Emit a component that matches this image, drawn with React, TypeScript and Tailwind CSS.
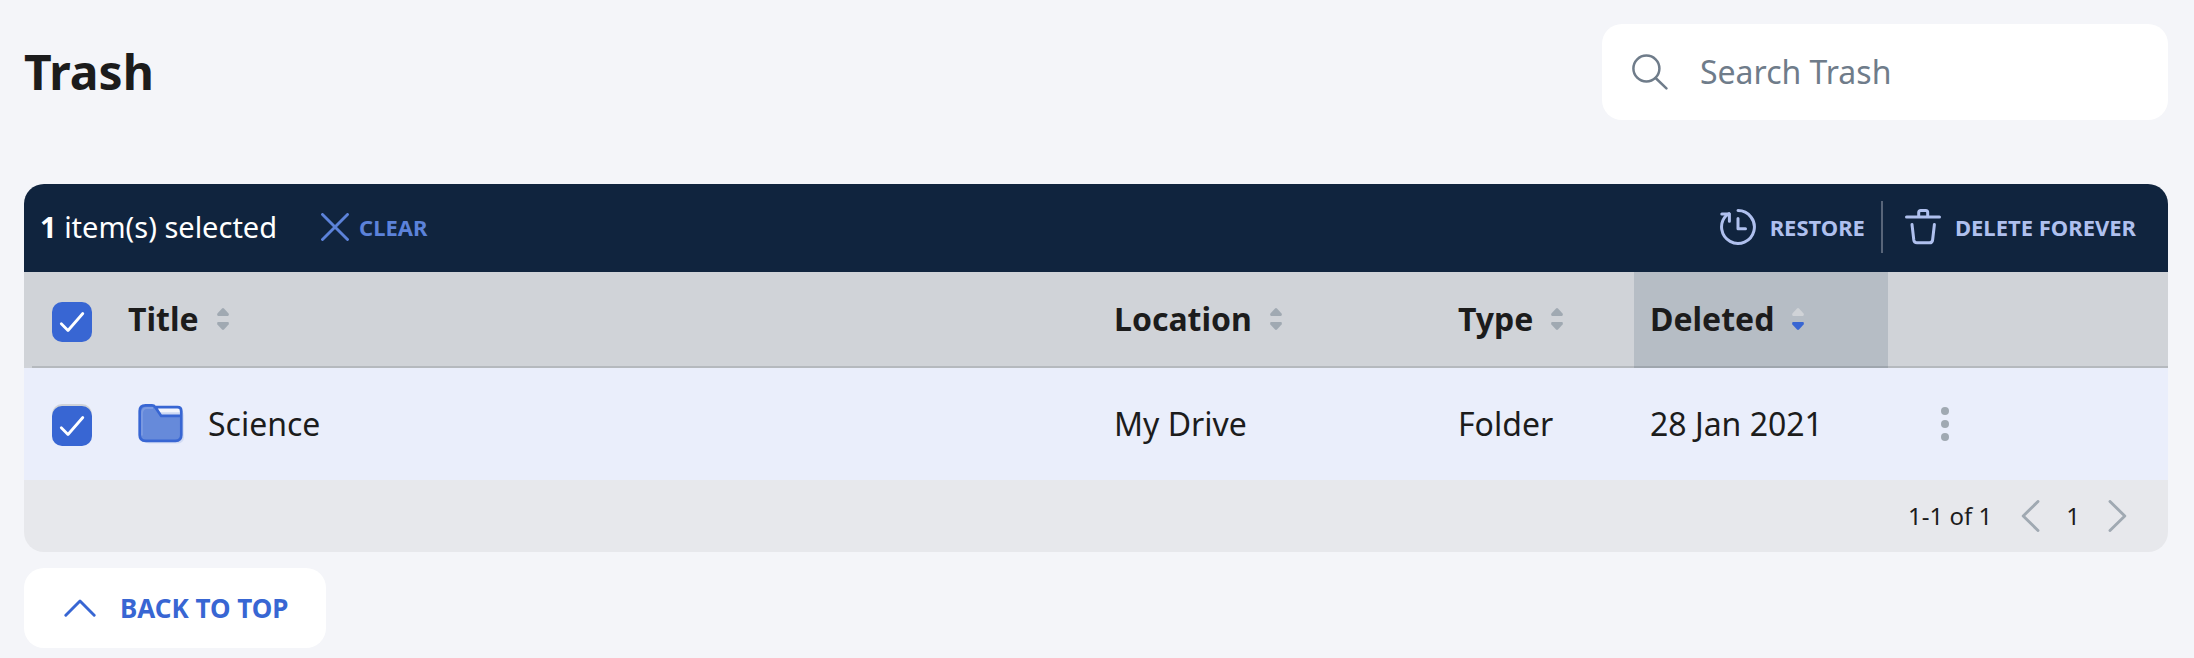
import { useState } from "react";

type SortDirection = "none" | "descending";

function Checkbox({
  label,
  checked,
  raised = false,
  onChange,
}: {
  label: string;
  checked: boolean;
  raised?: boolean;
  onChange: () => void;
}) {
  return (
    <div className="grid size-10">
      <input
        type="checkbox"
        aria-label={label}
        checked={checked}
        onChange={onChange}
        className={`peer col-start-1 row-start-1 size-10 cursor-pointer appearance-none rounded-[10px] border-2 border-[#a0a9b3] bg-white checked:border-0 checked:bg-[#3866d3] ${raised ? "shadow-[0_-2px_0_#d0d3d8]" : ""}`}
      />
      <svg
        viewBox="0 0 40 40"
        className="pointer-events-none col-start-1 row-start-1 size-10 opacity-0 peer-checked:opacity-100"
        fill="none"
        stroke="white"
        strokeWidth="2.8"
        strokeLinecap="round"
        strokeLinejoin="round"
        aria-hidden="true"
      >
        <path d="M9.3 21.8 L16 28.5 L30.8 11.5" />
      </svg>
    </div>
  );
}

function SortHeader({ title, sort = "none" }: { title: string; sort?: SortDirection }) {
  const active = sort === "descending";
  return (
    <th
      scope="col"
      aria-sort={sort}
      className={`h-24 border-b-2 px-4 text-left ${active ? "border-[#9fa6ae] bg-[#b6bdc5]" : "border-[#b5b9be]"}`}
    >
      <button type="button" className="flex items-center gap-[18px] font-bold">
        {title}
        <svg viewBox="0 0 12 22" className="h-[22px] w-3" aria-hidden="true">
          <path
            d="M5 .5 Q6 -.4 7 .5 L11.6 5.6 Q12.4 7.8 10.8 8 L1.2 8 Q-.4 7.8 .4 5.6 Z"
            fill={active ? "#d0d3d7" : "#a0a9b2"}
          />
          <path
            d="M5 21.5 Q6 22.4 7 21.5 L11.6 16.4 Q12.4 14.2 10.8 14 L1.2 14 Q-.4 14.2 .4 16.4 Z"
            fill={active ? "#3866d3" : "#a0a9b2"}
          />
        </svg>
      </button>
    </th>
  );
}

function FolderIcon() {
  return (
    <svg viewBox="0 -0.6 48 42" className="h-[42px] w-12" fill="none" aria-hidden="true">
      <rect x="5" y="6" width="41" height="34" rx="6" fill="#d3dcf4" />
      <path d="M17 4 H40 Q43 4 43 7 V16 H22 Z" fill="#cdd8f3" />
      <path d="M20 4.5 H41.5 V8.6 H21.5 Z" fill="#f3f5fc" />
      <path
        d="M1.7 7.5 Q1.7 1.7 7.5 1.7 H13.5 Q16 1.7 17.5 4 L23.2 12.5 H43.3 V31.5 Q43.3 37.3 37.5 37.3 H7.5 Q1.7 37.3 1.7 31.5 Z"
        fill="#668ada"
      />
      <path
        d="M1.7 7.5 Q1.7 1.7 7.5 1.7 H14 Q16 1.7 17.3 3.6 L23.2 12.3 H43 M16.5 3.6 H39.5 Q43.3 3.6 43.3 7.4 V31.5 Q43.3 37.3 37.5 37.3 H7.5 Q1.7 37.3 1.7 31.5 V7.5"
        stroke="#3866d3"
        strokeWidth="2.7"
        strokeLinejoin="round"
      />
      <path d="M4 32 V10 Q4 4.4 9 4.4 H15" stroke="#7c9ae0" strokeWidth="1.8" />
    </svg>
  );
}

export default function App() {
  const [selected, setSelected] = useState(true);
  const toggle = () => setSelected(!selected);

  return (
    <main className="min-h-screen bg-[#f4f5f9] px-6 pt-6 pb-2 font-['Noto_Sans',sans-serif] text-[#1c1c1c] sm:pr-[26px]">
      <header className="mb-16 flex items-center justify-between gap-6">
        <h1 className="text-5xl font-bold">Trash</h1>
        <div className="flex h-24 w-[566px] items-center gap-8 rounded-[20px] bg-white pr-6 pl-[30px]">
          <svg
            viewBox="0 0 36 36"
            className="size-9 shrink-0"
            fill="none"
            stroke="#6f7c8a"
            strokeWidth="2.5"
            strokeLinecap="round"
            aria-hidden="true"
          >
            <ellipse cx="14.4" cy="14.5" rx="13" ry="13" />
            <path d="M23.6 24 L34.4 34.4" />
          </svg>
          <input
            type="search"
            aria-label="Search Trash"
            placeholder="Search Trash"
            className="w-full min-w-0 bg-transparent text-[32px] outline-none placeholder:text-[#6f7c8a]"
          />
        </div>
      </header>

      <section className="overflow-hidden rounded-[20px]">
        <div className="flex h-[88px] items-center justify-between bg-[#10243e] pr-8 pb-0.5 pl-4 text-[22px] font-bold">
          <div className="flex items-center gap-11">
            <p className="text-[29px] font-normal text-white">
              <b>{selected ? 1 : 0}</b> item(s) selected
            </p>
            <button type="button" className="flex items-center gap-2.5 text-[#5c82d9]" onClick={() => setSelected(false)}>
              <svg
                viewBox="0 0 28 28"
                className="size-7"
                fill="none"
                stroke="currentColor"
                strokeWidth="2.9"
                strokeLinecap="round"
                aria-hidden="true"
              >
                <path d="M1.5 1.5 L26.5 26.5 M26.5 1.5 L1.5 26.5" />
              </svg>
              CLEAR
            </button>
          </div>
          <div className="flex items-center text-[#afc0ee]">
            <button type="button" className="flex items-center gap-3.5">
              <svg
                viewBox="0 0 36 36"
                className="size-9"
                fill="none"
                stroke="currentColor"
                strokeWidth="3"
                strokeLinecap="round"
                strokeLinejoin="round"
                aria-hidden="true"
              >
                <path d="M18 1.6 A16.4 16.4 0 1 1 6 6.8 L9 4.6" />
                <path d="M1.8 5 H9.4 V12.3" />
                <path d="M18 9.5 V19.7 H25.5" />
              </svg>
              RESTORE
            </button>
            <span className="mr-[22px] ml-4 h-[52px] w-0.5 bg-[#586579]" />
            <button type="button" className="flex items-center gap-3.5">
              <svg
                viewBox="0 0 36 36"
                className="size-9"
                fill="none"
                stroke="currentColor"
                strokeWidth="3"
                strokeLinecap="round"
                strokeLinejoin="round"
                aria-hidden="true"
              >
                <path d="M1.5 8 H34.5" />
                <path d="M13.7 7 V3.6 Q13.7 1.6 15.7 1.6 H20.7 Q22.7 1.6 22.7 3.6 V7" />
                <path d="M7 15.5 L8.8 31 Q9.2 33.8 12 33.8 H24.5 Q27.3 33.8 27.6 31 L29.4 15.5" />
              </svg>
              DELETE FOREVER
            </button>
          </div>
        </div>

        <table className="w-full table-fixed border-separate border-spacing-0 text-[32px]">
          <colgroup>
            <col className="w-[88px]" />
            <col />
            <col className="w-[344px]" />
            <col className="w-48" />
            <col className="w-[254px]" />
            <col className="w-[280px]" />
          </colgroup>
          <thead className="bg-[#d0d3d8]">
            <tr>
              <th
                scope="col"
                className="h-24 bg-[linear-gradient(#b5b9be,#b5b9be)] bg-[length:100%_2px] bg-[position:8px_94px] bg-no-repeat pt-1 pl-7"
              >
                <Checkbox label="Select all items" checked={selected} onChange={toggle} />
              </th>
              <SortHeader title="Title" />
              <SortHeader title="Location" />
              <SortHeader title="Type" />
              <SortHeader title="Deleted" sort="descending" />
              <td className="border-b-2 border-[#b5b9be]" />
            </tr>
          </thead>
          <tbody className="bg-[#eaeefb]">
            <tr>
              <td className="h-28 pt-1 pl-7">
                <Checkbox label="Select Science" checked={selected} onChange={toggle} raised />
              </td>
              <td className="px-4">
                <div className="flex items-center gap-[22px] pl-2.5">
                  <FolderIcon />
                  Science
                </div>
              </td>
              <td className="px-4">My Drive</td>
              <td className="px-4">Folder</td>
              <td className="px-4">28 Jan 2021</td>
              <td className="pl-[52px]">
                <button type="button" aria-label="More actions" className="block">
                  <svg viewBox="0 0 10 34" className="h-[34px] w-2.5" fill="#a0a9b2" aria-hidden="true">
                    <circle cx="5" cy="4" r="4" />
                    <circle cx="5" cy="17" r="4" />
                    <circle cx="5" cy="30" r="4" />
                  </svg>
                </button>
              </td>
            </tr>
          </tbody>
        </table>

        <nav aria-label="Pagination" className="flex h-[72px] items-center justify-end bg-[#e7e8ec] pr-10 text-2xl">
          <span className="mr-7">1-1 of 1</span>
          <button type="button" aria-label="Previous page">
            <svg
              viewBox="0 0 20 32"
              className="h-8 w-5"
              fill="none"
              stroke="#a0a9b2"
              strokeWidth="2.9"
              strokeLinecap="round"
              strokeLinejoin="round"
            >
              <path d="M18 1.5 L3.2 16 L18 30.5" />
            </svg>
          </button>
          <span className="mr-7 ml-[26px]">1</span>
          <button type="button" aria-label="Next page">
            <svg
              viewBox="0 0 20 32"
              className="h-8 w-5"
              fill="none"
              stroke="#a0a9b2"
              strokeWidth="2.9"
              strokeLinecap="round"
              strokeLinejoin="round"
            >
              <path d="M2 1.5 L16.8 16 L2 30.5" />
            </svg>
          </button>
        </nav>
      </section>

      <a
        href="#top"
        className="mt-4 inline-flex h-20 items-center gap-6 rounded-[20px] bg-white pr-[38px] pl-10 text-[26px] font-bold text-[#3866d3]"
      >
        <svg
          viewBox="0 0 32 18"
          className="h-[18px] w-8"
          fill="none"
          stroke="currentColor"
          strokeWidth="2.9"
          strokeLinecap="round"
          strokeLinejoin="round"
          aria-hidden="true"
        >
          <path d="M1.8 16.2 L16 2 L30.2 16.2" />
        </svg>
        BACK TO TOP
      </a>
    </main>
  );
}
